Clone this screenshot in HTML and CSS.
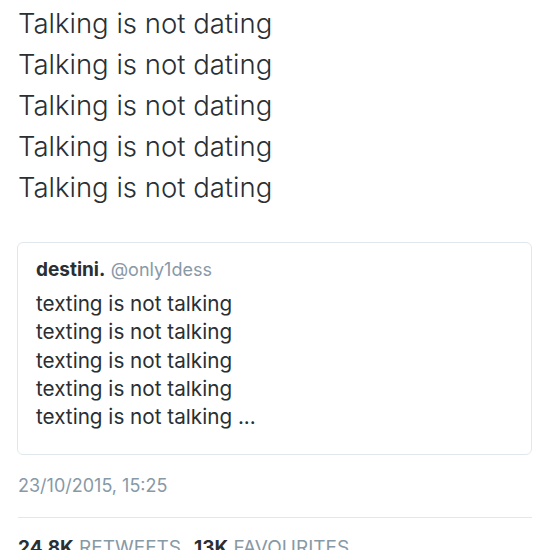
FILE: index.html
```html
<!doctype html>
<html lang="en">

<head>
  <meta charset="utf-8">
  <title>Tweet</title>
  <link rel="stylesheet" href="styles.css">
</head>

<body>
  <div class="tweet">
    <div class="tweet__text">
      Talking is not dating<br>
      Talking is not dating<br>
      Talking is not dating<br>
      Talking is not dating<br>
      Talking is not dating
    </div>

    <div class="quote">
      <div class="quote__header">
        <span class="quote__name">destini.</span>
        <span class="quote__handle">@only1dess</span>
      </div>
      <div class="quote__text">
        texting is not talking<br>
        texting is not talking<br>
        texting is not talking<br>
        texting is not talking<br>
        texting is not talking ...
      </div>
    </div>

    <div class="tweet__date">23/10/2015, 15:25</div>

    <div class="tweet__stats">
      <span class="tweet__stat"><b class="tweet__count">24.8K</b> RETWEETS</span>
      <span class="tweet__stat"><b class="tweet__count">13K</b> FAVOURITES</span>
    </div>
  </div>
</body>

</html>
```

FILE: styles.css
```css
body {
  margin: 0;
  font-family: Inter, "Noto Sans", sans-serif;
  color: #292f33;
  background-color: #fff;
}

.tweet {
  padding: 0 18px 0 18px;
}

.tweet__text {
  font-size: 27.5px;
  font-weight: 300;
  line-height: 41px;
  padding-top: 3px;
}

.quote {
  margin-top: 34px;
  border: 1px solid #e1e8ed;
  border-radius: 6px;
  padding: 14px 18px 23px 18px;
  margin-left: -1px;
}

.quote__header {
  font-size: 19px;
  line-height: 26px;
}

.quote__name {
  font-weight: 700;
}

.quote__handle {
  color: #8899a6;
  font-size: 18px;
}

.quote__text {
  font-size: 20.7px;
  line-height: 28.25px;
  margin-top: 7px;
}

.tweet__date {
  color: #8899a6;
  font-size: 18px;
  padding: 20px 0 21px 0;
  border-bottom: 1px solid #e1e8ed;
}

.tweet__stats {
  display: flex;
  gap: 13px;
  color: #8899a6;
  font-size: 19px;
  padding-top: 18px;
}

.tweet__count {
  color: #292f33;
  font-weight: 700;
}
```
